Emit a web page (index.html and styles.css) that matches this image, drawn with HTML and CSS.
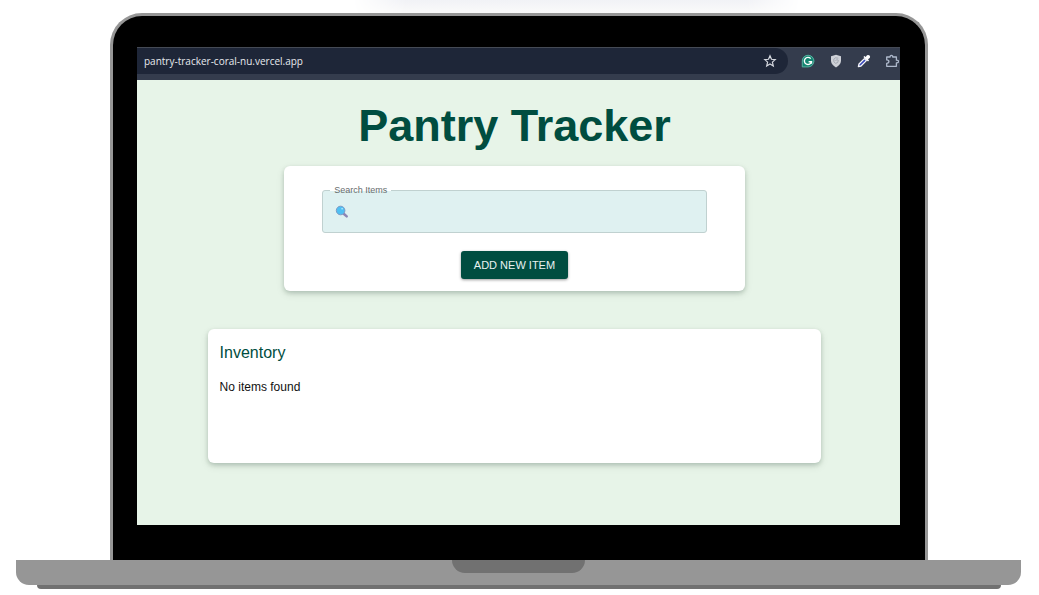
FILE: index.html
```html
<!DOCTYPE html>
<html lang="en">
<head>
<meta charset="utf-8">
<title>Pantry Tracker</title>
<link rel="stylesheet" href="styles.css">
</head>
<body>
<div class="glow"></div>
<div class="laptop">
  <div class="lid">
    <div class="screen">
      <header class="toolbar">
        <div class="address">
          <span class="url">pantry-tracker-coral-nu.vercel.app</span>
          <svg class="icon" viewBox="0 0 14 14" fill="none" stroke="#d5d8df" stroke-width="1.2" stroke-linejoin="miter"><path d="M7 1.8 8.5 5.3 12.2 5.6 9.4 8.1 10.3 11.9 7 9.9 3.7 11.9 4.6 8.1 1.8 5.6 5.5 5.3Z"/></svg>
        </div>
        <div class="extensions">
          <svg class="icon" viewBox="0 0 14 14"><path d="M7 .7A6.3 6.3 0 1 1 7 13.3H.8V7A6.3 6.3 0 0 1 7 .7Z" fill="#128570"/><path d="M1.3 12.9V7A5.8 5.8 0 1 1 7 12.9Z" fill="none" stroke="#6fb3a8" stroke-width=".8"/><path d="M9.7 4.6A3.6 3.6 0 1 0 10.5 7.7H7.6M10.5 7.2V9.8" fill="none" stroke="#fff" stroke-width="1.4"/></svg>
          <svg class="icon" viewBox="0 0 14 14"><path d="M7 .7 12 2.3V7Q11.6 11 7 13.4 2.4 11 2 7V2.3Z" fill="#ced1d7"/><path d="M9.3 4.2Q6 2.9 4.8 5.2 4.2 8.2 6.5 9.4 9.7 9.1 9.3 6.2 7.4 4.7 6.5 7" fill="none" stroke="#9a9faa" stroke-width=".8"/></svg>
          <svg class="icon" viewBox="0 0 14 14"><path d="M7.4 4.6 2 10 1.4 12.6 4 12 9.4 6.6Z" fill="#3544b8" stroke="#f4f5f8" stroke-width="1.3" stroke-linejoin="round"/><path d="M6.4 3 7.5 2 8.7 3 10 1.3Q11.4.4 12.6 1.5 13.6 2.7 12.7 4L11 5.3 12 6.5 11 7.6Z" fill="#fff"/></svg>
          <svg class="icon" viewBox="0 0 14 14" fill="none" stroke="#aeb9cc" stroke-width="1.3" stroke-linejoin="round"><path d="M1.7 3H5.1V2.2Q6.4.4 7.7 2.2V3H11.4V6.2Q13.7 6.2 13.7 7.5 13.7 8.8 11.4 8.8V12.3H1.7V9.3Q3.9 9.2 3.9 7.6 3.9 6 1.7 5.9Z"/></svg>
        </div>
      </header>
      <main class="page">
        <h1 class="title">Pantry Tracker</h1>
        <section class="card search-card">
          <div class="field">
            <label class="field-label" for="search">Search Items</label>
            <svg class="lens" viewBox="0 0 14 14"><path d="m8.7 8.7 3 2.7" stroke="#8d86b5" stroke-width="2.5" stroke-linecap="round"/><circle cx="5.6" cy="5.5" r="4.3" fill="#4fc0f3" stroke="#7d9bc6"/><circle cx="7.1" cy="3.8" r=".8" fill="#c8efff"/></svg>
            <input class="field-input" id="search" type="text">
          </div>
          <button class="add" type="button">ADD NEW ITEM</button>
        </section>
        <section class="card inventory">
          <h2 class="heading">Inventory</h2>
          <p class="empty">No items found</p>
        </section>
      </main>
    </div>
  </div>
  <div class="base"><div class="notch"></div></div>
  <div class="foot"></div>
</div>
</body>
</html>
```
FILE: styles.css
```css
* {
  box-sizing: border-box;
}

body {
  margin: 0;
  background: #fff;
  font-family: "Liberation Sans", Arial, sans-serif;
  overflow-x: hidden;
}

.glow {
  position: absolute;
  top: 0;
  left: 34%;
  right: 23%;
  height: 13px;
  background: linear-gradient(#f1f2f6, #fafafa);
  -webkit-mask-image: linear-gradient(90deg, transparent, #000 12%, #000 88%, transparent);
  mask-image: linear-gradient(90deg, transparent, #000 12%, #000 88%, transparent);
}

.laptop {
  position: relative;
  padding: 13px 18px 0 16px;
}

.lid {
  margin: 0 93px 0 94px;
  padding: 31px 25px 35px 24px;
  background: #000;
  border: 3px solid #969696;
  border-bottom: 0;
  border-radius: 32px 32px 0 0;
}

.screen {
  background: #e7f4e8;
  overflow: hidden;
}

.toolbar {
  display: flex;
  align-items: flex-start;
  height: 33px;
  background: #343c4d;
  border-top: 1px solid #454a55;
}

.address {
  flex: 1;
  display: flex;
  align-items: center;
  justify-content: space-between;
  height: 26px;
  padding: 0 11px 0 7px;
  background: #1e2638;
  border-radius: 0 13px 13px 0;
}

.url {
  font-family: "Open Sans", "Noto Sans", sans-serif;
  font-size: 10px;
  line-height: 16px;
  color: #e8eaee;
}

.extensions {
  display: flex;
  align-items: center;
  gap: 14px;
  height: 26px;
  margin-right: 1px;
  padding-left: 13px;
}

.icon,
.lens {
  display: block;
  flex: none;
  width: 14px;
  height: 14px;
}

.page {
  display: flex;
  flex-direction: column;
  align-items: center;
  padding: 18px 8px 62px 0;
}

.title {
  margin: 0;
  font-size: 45px;
  line-height: 56px;
  font-weight: 700;
  color: #004d40;
}

.card {
  background: #fff;
  border-radius: 6px;
  box-shadow: 0 2px 4px rgba(0, 40, 20, 0.18), 0 3px 8px rgba(0, 40, 20, 0.1);
}

.search-card {
  display: flex;
  flex-direction: column;
  align-items: center;
  width: 61%;
  margin-top: 12px;
  padding: 24px 38px 12px;
}

.field {
  position: relative;
  display: flex;
  align-items: center;
  align-self: stretch;
  height: 43px;
  padding: 0 12px;
  background: #dff1f1;
  border: 1px solid #c0d1d0;
  border-radius: 3px;
}

.field-label {
  position: absolute;
  top: -7px;
  left: 7px;
  padding: 0 4px;
  font-size: 9px;
  line-height: 12px;
  color: #666c6c;
  background: linear-gradient(#fff 7px, #dff1f1 7px);
}

.field-input {
  flex: 1;
  min-width: 0;
  height: 24px;
  padding: 0 6px;
  border: 0;
  outline: 0;
  background: transparent;
  font: inherit;
  font-size: 12px;
}

.add {
  margin-top: 18px;
  padding: 6px 13px;
  border: 0;
  border-radius: 3px;
  background: #004d40;
  box-shadow: 0 1px 3px rgba(0, 0, 0, 0.4);
  color: #e9f2f0;
  font-family: inherit;
  font-size: 11px;
  line-height: 16px;
}

.inventory {
  width: 81.3%;
  min-height: 134px;
  margin-top: 38px;
  padding: 14px 12px;
}

.heading {
  margin: 0;
  font-size: 16px;
  line-height: 20px;
  font-weight: 400;
  color: #004d40;
}

.empty {
  margin: 16px 0 0;
  font-size: 12px;
  line-height: 16px;
  color: #111;
}

.base {
  display: flex;
  justify-content: center;
  height: 25px;
  background: #969696;
  border-radius: 0 0 13px 13px;
}

.notch {
  width: 133px;
  height: 13px;
  background: #717171;
  border-radius: 0 0 13px 13px;
}

.foot {
  height: 4px;
  margin: 0 20px 0 21px;
  background: #717171;
  border-radius: 0 0 4px 4px;
}
```
